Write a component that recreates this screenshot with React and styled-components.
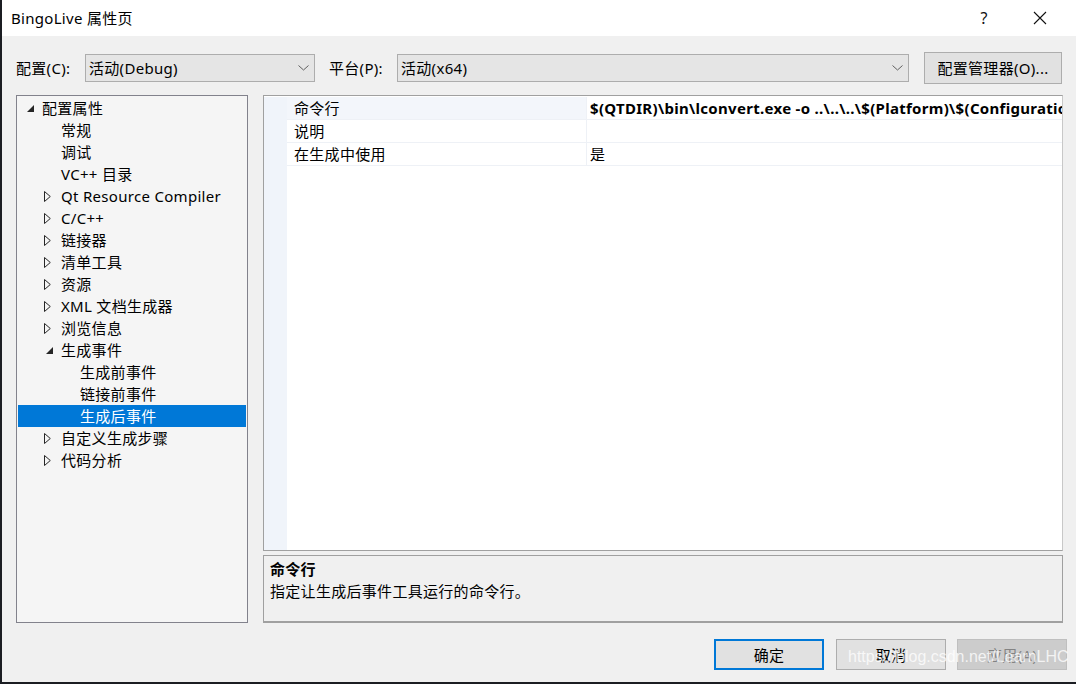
import React from "react";
import styled, { createGlobalStyle } from "styled-components";

const Global = createGlobalStyle`
  html, body { margin: 0; padding: 0; background: #1b1d22; }
  body { font-family: "Noto Sans", "Noto Sans CJK SC", sans-serif; font-size: 15px; letter-spacing: 0.3px; color: #000; }
  * { box-sizing: border-box; }
`;

const Window = styled.div`
  position: relative;
  margin-left: 2px;
  width: 1074px;
  height: 682px;
  background: #f0f0f0;
  display: flex;
  flex-direction: column;
  overflow: hidden;
`;

const TitleBar = styled.div`
  height: 36px;
  background: #fff;
  display: flex;
  align-items: center;
  padding-left: 9px;
`;

const Title = styled.div`
  flex: 1;
  font-size: 15px;
  line-height: 20px;
`;

const TitleBtn = styled.div`
  width: ${p => p.w}px;
  display: flex;
  justify-content: center;
  align-items: center;
  font-size: 16px;
  color: #111;
`;

const Toolbar = styled.div`
  display: flex;
  align-items: center;
  padding: 16px 0 0 14px;
  height: 48px;
`;

const Label = styled.div`
  width: ${p => p.w}px;
  line-height: 20px;
`;

const Combo = styled.div`
  width: ${p => p.w}px;
  height: 28px;
  background: #e5e5e5;
  border: 1px solid #adadad;
  display: flex;
  align-items: center;
  padding-left: 3px;
  margin-right: ${p => p.mr}px;
`;

const ComboText = styled.div`
  flex: 1;
  line-height: 20px;
`;

const Chevron = styled.div`
  width: 22px;
  display: flex;
  justify-content: center;
`;

const Button = styled.div`
  width: ${p => p.w}px;
  height: ${p => p.h}px;
  background: ${p => (p.disabled ? "#cccccc" : "#e1e1e1")};
  border: ${p => (p.primary ? "2px solid #0078d7" : `1px solid ${p.disabled ? "#bfbfbf" : "#adadad"}`)};
  color: ${p => (p.disabled ? "#838383" : "#000")};
  display: flex;
  align-items: center;
  justify-content: center;
  line-height: 20px;
  margin-right: ${p => p.mr || 0}px;
`;

const Main = styled.div`
  display: flex;
  padding: 11px 0 0 14px;
  height: 540px;
`;

const Tree = styled.div`
  width: 232px;
  height: 528px;
  background: #f5f5f5;
  border: 1px solid #82828c;
  padding: 1px;
  margin-right: 15px;
`;

const TreeRow = styled.div`
  height: 22px;
  display: flex;
  align-items: center;
  padding-left: ${p => 6 + p.level * 19}px;
  background: ${p => (p.selected ? "#0078d7" : "transparent")};
  color: ${p => (p.selected ? "#fff" : "#000")};
  white-space: nowrap;
  line-height: 20px;
`;

const Expander = styled.div`
  width: 18px;
  height: 22px;
  display: flex;
  align-items: center;
  justify-content: flex-start;
  padding-left: ${p => (p.open ? 3 : 1)}px;
`;

const RightCol = styled.div`
  width: 800px;
  display: flex;
  flex-direction: column;
`;

const Grid = styled.div`
  height: 456px;
  background: #fff;
  border: 1px solid #a0a0a0;
  border-right-color: #c8c8c8;
  padding-top: 1px;
  display: flex;
`;

const Gutter = styled.div`
  width: 23px;
  background: #f0f4fa;
`;

const Rows = styled.div`
  flex: 1;
  min-width: 0;
`;

const PropRow = styled.div`
  height: 23px;
  display: flex;
  border-bottom: 1px solid #eef1f6;
`;

const NameCell = styled.div`
  width: 300px;
  padding-left: 7px;
  line-height: 22px;
  background: ${p => (p.hl ? "#f3f6fb" : "#fff")};
  border-right: 1px solid #eef1f6;
`;

const ValueCell = styled.div`
  flex: 1;
  min-width: 0;
  padding-left: 3px;
  line-height: 22px;
  white-space: nowrap;
  overflow: hidden;
  font-weight: ${p => (p.bold ? 700 : 400)};
`;

const Desc = styled.div`
  margin-top: 4px;
  height: 68px;
  border: 1px solid #a0a0a0;
  border-bottom: 2px solid #a0a0a0;
  padding: 3px 6px;
  background: #f0f0f0;
`;

const DescTitle = styled.div`
  font-weight: 700;
  line-height: 20px;
`;

const DescText = styled.div`
  line-height: 22px;
  margin-top: 1px;
`;

const Footer = styled.div`
  display: flex;
  justify-content: flex-end;
  gap: 11px;
  padding: 15px 9px 0 0;
`;

const Watermark = styled.div`
  position: absolute;
  left: 846px;
  top: 648px;
  font-family: "Liberation Sans", Arial, sans-serif;
  font-size: 16px;
  letter-spacing: 0;
  color: rgba(255, 255, 255, 0.78);
  pointer-events: none;
  white-space: nowrap;
`;

const ChevronIcon = () => (
  <svg width="11" height="6" viewBox="0 0 11 6">
    <polyline points="0.5,0.5 5.5,5 10.5,0.5" fill="none" stroke="#606060" strokeWidth="1" />
  </svg>
);

const OpenArrow = () => (
  <svg width="7" height="7" viewBox="0 0 7 7">
    <polygon points="7,0 7,7 0,7" fill="#262626" />
  </svg>
);

const ClosedArrow = () => (
  <svg width="7" height="11" viewBox="0 0 7 11">
    <polygon points="0.5,0.5 6.3,5.5 0.5,10.5" fill="none" stroke="#262626" strokeWidth="1" />
  </svg>
);

const CloseIcon = () => (
  <svg width="14" height="14" viewBox="0 0 14 14">
    <path d="M1 1 L13 13 M13 1 L1 13" stroke="#111" strokeWidth="1.1" />
  </svg>
);

const tree = [
  { label: "配置属性", level: 0, exp: "open" },
  { label: "常规", level: 1 },
  { label: "调试", level: 1 },
  { label: "VC++ 目录", level: 1 },
  { label: "Qt Resource Compiler", level: 1, exp: "closed" },
  { label: "C/C++", level: 1, exp: "closed" },
  { label: "链接器", level: 1, exp: "closed" },
  { label: "清单工具", level: 1, exp: "closed" },
  { label: "资源", level: 1, exp: "closed" },
  { label: "XML 文档生成器", level: 1, exp: "closed" },
  { label: "浏览信息", level: 1, exp: "closed" },
  { label: "生成事件", level: 1, exp: "open" },
  { label: "生成前事件", level: 2 },
  { label: "链接前事件", level: 2 },
  { label: "生成后事件", level: 2, selected: true },
  { label: "自定义生成步骤", level: 1, exp: "closed" },
  { label: "代码分析", level: 1, exp: "closed" },
];

const props = [
  { name: "命令行", value: "$(QTDIR)\\bin\\lconvert.exe -o ..\\..\\..\\$(Platform)\\$(Configuration)\\translations\\zh_CN.qm", bold: true, hl: true },
  { name: "说明", value: "" },
  { name: "在生成中使用", value: "是" },
];

export default function App() {
  return (
    <>
      <Global />
      <Window>
        <TitleBar>
          <Title>BingoLive 属性页</Title>
          <TitleBtn w={40}>?</TitleBtn>
          <TitleBtn w={72}><CloseIcon /></TitleBtn>
        </TitleBar>
        <Toolbar>
          <Label w={69}>配置(C):</Label>
          <Combo w={230} mr={14}>
            <ComboText>活动(Debug)</ComboText>
            <Chevron><ChevronIcon /></Chevron>
          </Combo>
          <Label w={68}>平台(P):</Label>
          <Combo w={512} mr={15}>
            <ComboText>活动(x64)</ComboText>
            <Chevron><ChevronIcon /></Chevron>
          </Combo>
          <Button w={138} h={32}>配置管理器(O)...</Button>
        </Toolbar>
        <Main>
          <Tree>
            {tree.map((t, i) => (
              <TreeRow key={i} level={t.level} selected={t.selected}>
                {t.level < 2 && (
                  <Expander open={t.exp === "open"}>
                    {t.exp === "open" ? <OpenArrow /> : t.exp === "closed" ? <ClosedArrow /> : null}
                  </Expander>
                )}
                {t.level === 2 && <Expander />}
                {t.label}
              </TreeRow>
            ))}
          </Tree>
          <RightCol>
            <Grid>
              <Gutter />
              <Rows>
                {props.map((p, i) => (
                  <PropRow key={i}>
                    <NameCell hl={p.hl}>{p.name}</NameCell>
                    <ValueCell bold={p.bold}>{p.value}</ValueCell>
                  </PropRow>
                ))}
              </Rows>
            </Grid>
            <Desc>
              <DescTitle>命令行</DescTitle>
              <DescText>指定让生成后事件工具运行的命令行。</DescText>
            </Desc>
          </RightCol>
        </Main>
        <Footer>
          <Button w={110} h={31} primary mr={1}>确定</Button>
          <Button w={110} h={31}>取消</Button>
          <Button w={110} h={31} disabled>应用(A)</Button>
        </Footer>
        <Watermark>https://blog.csdn.net/LearnLHC</Watermark>
      </Window>
    </>
  );
}
